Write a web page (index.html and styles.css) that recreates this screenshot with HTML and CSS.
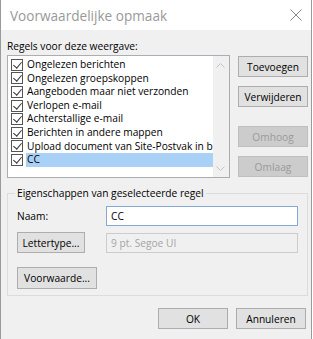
FILE: index.html
```html
<!DOCTYPE html>
<html>
<head>
    <meta charset="utf-8" />
    <title>Voorwaardelijke opmaak</title>
    <link rel="stylesheet" href="styles.css">
</head>
<body>
    <div class="window">
        <div class="titlebar">
            <span class="title">Voorwaardelijke opmaak</span>
            <svg class="close" width="12" height="12" viewBox="0 0 12 12">
                <path d="M0.5 0.5 L11.5 11.5 M11.5 0.5 L0.5 11.5" stroke="#8a8a8a" stroke-width="1" fill="none" />
            </svg>
        </div>

        <div class="content">
            <div class="caption">Regels voor deze weergave:</div>

            <div class="top">
                <div class="listbox">
                    <ul class="rules">
                        <li class="rule"><span class="check"></span><span class="name">Ongelezen berichten</span></li>
                        <li class="rule"><span class="check"></span><span class="name">Ongelezen groepskoppen</span></li>
                        <li class="rule"><span class="check"></span><span class="name">Aangeboden maar niet verzonden</span></li>
                        <li class="rule"><span class="check"></span><span class="name">Verlopen e-mail</span></li>
                        <li class="rule"><span class="check"></span><span class="name">Achterstallige e-mail</span></li>
                        <li class="rule"><span class="check"></span><span class="name">Berichten in andere mappen</span></li>
                        <li class="rule"><span class="check"></span><span class="name">Upload document van Site-Postvak in b</span></li>
                        <li class="rule selected"><span class="check"></span><span class="name">CC</span></li>
                    </ul>
                    <div class="scrollbar">
                        <svg width="9" height="5" viewBox="0 0 9 5"><path d="M0.5 4.5 L4.5 0.5 L8.5 4.5" stroke="#c4c4c4" fill="none" /></svg>
                        <svg width="9" height="5" viewBox="0 0 9 5"><path d="M0.5 0.5 L4.5 4.5 L8.5 0.5" stroke="#c4c4c4" fill="none" /></svg>
                    </div>
                </div>

                <div class="side-buttons">
                    <button class="btn">Toevoegen</button>
                    <button class="btn">Verwijderen</button>
                    <button class="btn disabled move-up">Omhoog</button>
                    <button class="btn disabled">Omlaag</button>
                </div>
            </div>

            <fieldset class="group">
                <legend>Eigenschappen van geselecteerde regel</legend>
                <div class="props">
                    <label class="prop-label">Naam:</label>
                    <div class="field active">CC</div>
                    <button class="btn font-btn">Lettertype...</button>
                    <div class="field readonly">9 pt. Segoe UI</div>
                </div>
                <button class="btn cond-btn">Voorwaarde...</button>
            </fieldset>

            <div class="footer">
                <button class="btn">OK</button>
                <button class="btn">Annuleren</button>
            </div>
        </div>
    </div>
</body>
</html>
```

FILE: styles.css
```css
* { margin: 0; padding: 0; box-sizing: border-box; }

body {
    background: #ffffff;
    font-family: "Open Sans", "Noto Sans", sans-serif;
    font-size: 10.2px;
    color: #000;
}

.window {
    width: 312px;
    height: 339px;
    border-left: 1px solid #9a9a9a;
    border-right: 1px solid #9a9a9a;
    background: #f0f0f0;
}

.titlebar {
    height: 30px;
    background: #ffffff;
    display: flex;
    align-items: center;
    justify-content: space-between;
    padding: 0 9px 0 9px;
}

.title {
    font-size: 13.6px;
    color: #999999;
}

.close { margin-bottom: 1px; }

.content {
    padding: 8px 5px 0 5px;
}

.caption {
    line-height: 16px;
    margin-left: 1px;
}

.top {
    display: flex;
    gap: 8px;
    margin-top: 1px;
}

.listbox {
    width: 223px;
    height: 123px;
    border: 1px solid #abadb3;
    background: #ffffff;
    display: flex;
    margin-left: 1px;
}

.rules {
    list-style-type: none;
    flex: 1;
    padding-top: 2px;
}

.rule {
    height: 13.6px;
    display: flex;
    align-items: center;
    padding-left: 3px;
    white-space: nowrap;
    overflow: hidden;
}

.rule .check {
    width: 12px;
    height: 12px;
    flex-shrink: 0;
    border: 1px solid #555;
    background: #fff;
    margin-right: 3px;
    position: relative;
}

.rule .check::after {
    content: "";
    position: absolute;
    left: 3px;
    top: 0px;
    width: 4px;
    height: 7px;
    border-right: 1px solid #333;
    border-bottom: 1px solid #333;
    transform: rotate(40deg);
}

.rule .name {
    flex: 1;
    line-height: 13.6px;
    padding-left: 1px;
    overflow: hidden;
}

.rule.selected .name { background: #a9d1f5; }

.scrollbar {
    width: 19px;
    background: #f0f0f0;
    display: flex;
    flex-direction: column;
    justify-content: space-between;
    align-items: center;
    padding: 7px 0 6px;
}

.side-buttons {
    display: flex;
    flex-direction: column;
    gap: 9px;
    padding-top: 1px;
}

.side-buttons .move-up { margin-top: 10px; }

.btn {
    width: 70px;
    height: 21px;
    background: #e1e1e1;
    border: 1px solid #adadad;
    font-family: inherit;
    font-size: 10.2px;
    color: #000;
}

.btn.disabled {
    background: #cccccc;
    border-color: #bfbfbf;
    color: #9a9a9a;
}

.group {
    margin: 8px 0 0 1px;
    width: 300px;
    height: 110px;
    border: 1px solid #dcdcdc;
    padding: 0 9px 0 9px;
}

.group legend {
    margin-left: -2px;
    padding: 0 2px;
    line-height: 14px;
}

.props {
    display: grid;
    grid-template-columns: 89px 192px;
    row-gap: 6px;
    align-items: center;
    margin-top: 6px;
}

.field {
    height: 20px;
    line-height: 18px;
    padding-left: 4px;
}

.field.active {
    background: #ffffff;
    border: 1px solid #86a8d3;
}

.field.readonly {
    background: #f0f0f0;
    border: 1px solid #cccccc;
    color: #a5a5a5;
}

.font-btn { width: 68px; }

.cond-btn {
    width: 80px;
    height: 22px;
    margin-top: 14px;
}

.footer {
    display: flex;
    justify-content: flex-end;
    gap: 8px;
    margin-top: 12px;
}
```
